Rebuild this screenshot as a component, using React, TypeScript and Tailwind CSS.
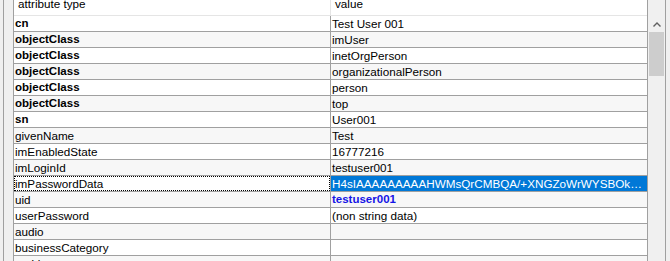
import React from 'react'

type Row = { name: string; value: string; bold?: boolean }

const rows: Row[] = [
  { name: 'cn', value: 'Test User 001', bold: true },
  { name: 'objectClass', value: 'imUser', bold: true },
  { name: 'objectClass', value: 'inetOrgPerson', bold: true },
  { name: 'objectClass', value: 'organizationalPerson', bold: true },
  { name: 'objectClass', value: 'person', bold: true },
  { name: 'objectClass', value: 'top', bold: true },
  { name: 'sn', value: 'User001', bold: true },
  { name: 'givenName', value: 'Test' },
  { name: 'imEnabledState', value: '16777216' },
  { name: 'imLoginId', value: 'testuser001' },
  { name: 'imPasswordData', value: 'H4sIAAAAAAAAAHWMsQrCMBQA/+XNGZoWrWYSBOkg2KHgIcvZ6ZYyxRERoutRkvXw' },
  { name: 'uid', value: 'testuser001' },
  { name: 'userPassword', value: '(non string data)' },
  { name: 'audio', value: '' },
  { name: 'businessCategory', value: '' },
  { name: 'carLicense', value: '' },
]

const App = () => {
  return (
    <div
      className="w-[670px] h-[261px] overflow-hidden flex bg-[#f0f0f0] text-[11.7px] text-black"
      style={{ fontFamily: '"Liberation Sans", Arial, sans-serif' }}
    >
      <div className="w-[3px] h-full bg-[#f0f0f0]" />
      <div className="w-[10px] h-full border-l border-[#a0a0a0] bg-[#f0f0f0]" />

      <div className="w-[635px] h-full border-l border-r border-[#a0a0a0] bg-white flex flex-col">
        <div className="h-[16px] flex shrink-0 border-b border-[#e5e5e5] overflow-hidden">
          <div className="w-[317px] border-r border-[#e5e5e5] pl-[4px] leading-[15px] -mt-[4px]">attribute type</div>
          <div className="flex-1 pl-[4px] leading-[15px] -mt-[4px]">value</div>
        </div>

        {rows.map((r, i) => {
          const odd = i % 2 === 1
          const focused = r.name === 'imPasswordData'
          const isUid = r.name === 'uid'
          return (
            <div
              key={i}
              className={`h-[16px] shrink-0 flex border-b border-[#a0a0a0] leading-[15px] ${odd ? 'bg-[#f7f7f7]' : 'bg-white'}`}
            >
              <div className="w-[317px] border-r border-[#a0a0a0]">
                {focused ? (
                  <div className="h-full border border-dotted border-black bg-white leading-[13px]">
                    {r.name}
                  </div>
                ) : (
                  <div className={`pl-[1px] ${r.bold ? 'font-bold text-[11.5px]' : ''}`}>{r.name}</div>
                )}
              </div>
              <div
                className={`flex-1 min-w-0 pl-[1px] pr-[4px] truncate ${focused ? 'bg-[#0078d7] text-white' : ''} ${isUid ? 'font-bold text-[11.5px] text-[#1515e6]' : ''}`}
              >
                {r.value}
              </div>
            </div>
          )
        })}
      </div>

      <div className="w-[17px] h-full bg-[#f0f0f0] flex flex-col">
        <div className="h-[16px] shrink-0" />
        <div className="h-[16px] shrink-0 flex items-center justify-center">
          <svg width="8" height="5" viewBox="0 0 8 5">
            <path d="M0.5 4.5 L4 1 L7.5 4.5" fill="none" stroke="#606060" strokeWidth="1.4" />
          </svg>
        </div>
        <div className="h-[44px] mx-[1px] bg-[#cdcdcd]" />
      </div>
      <div className="w-[1px] h-full bg-[#a0a0a0]" />
      <div className="flex-1 h-full bg-[#f0f0f0]" />
    </div>
  )
}

export default App
